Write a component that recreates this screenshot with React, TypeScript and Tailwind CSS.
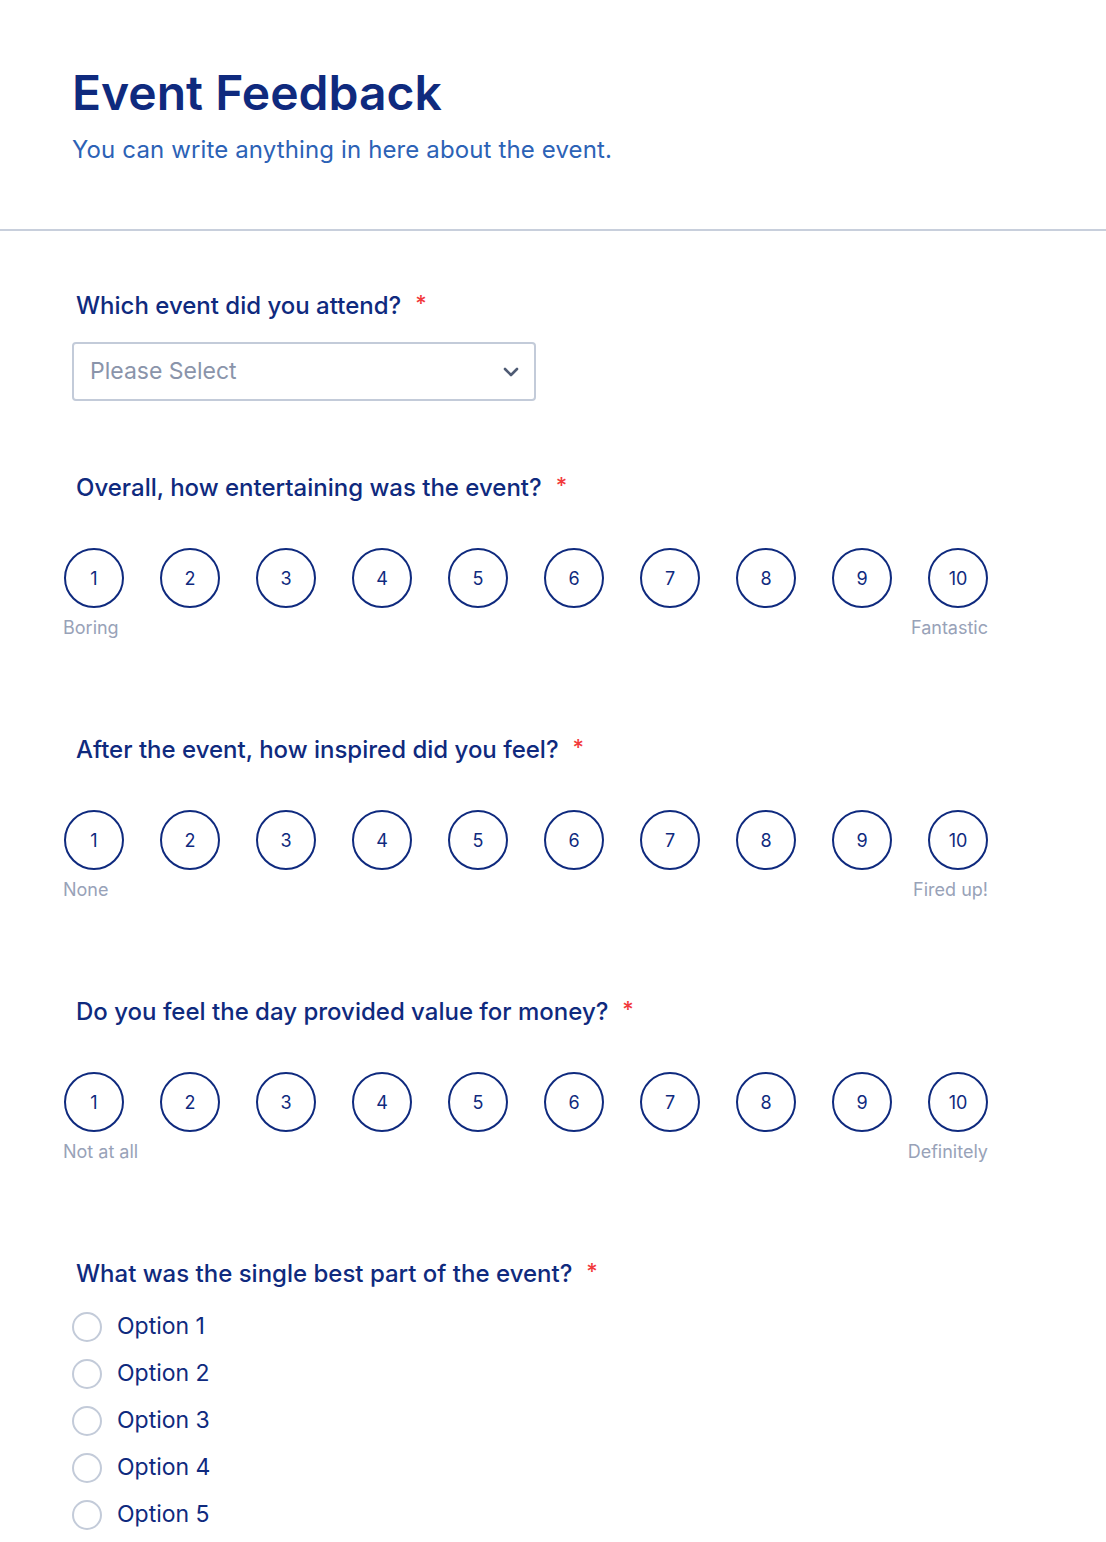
import React from "react";

const navy = "text-[#0f2a7e]";

const Label = ({ children }: { children: React.ReactNode }) => (
  <div className={`flex items-center pl-[4px] text-[24px] leading-[30px] font-medium ${navy}`}>
    <span>{children}</span>
    <span className="ml-[14px] text-[#f23a3c] text-[22px] leading-[30px] -mt-[6px]">*</span>
  </div>
);

const Rating = ({ q, low, high }: { q: string; low: string; high: string }) => (
  <div>
    <Label>{q}</Label>
    <div className="w-[924px] -ml-[8px] mt-[45px]">
      <div className="flex gap-[36px]">
        {[1, 2, 3, 4, 5, 6, 7, 8, 9, 10].map((n) => (
          <div
            key={n}
            className={`w-[60px] h-[60px] rounded-full border-2 border-[#0f2a7e] flex items-center justify-center text-[18px] ${navy}`}
          >
            {n}
          </div>
        ))}
      </div>
      <div className="flex justify-between mt-[8px] text-[18px] leading-[24px] text-[#98a2b8]">
        <span className="-ml-[1px]">{low}</span>
        <span>{high}</span>
      </div>
    </div>
  </div>
);

export default function App() {
  return (
    <div className="min-h-[1542px] bg-white" style={{ fontFamily: "Inter, 'Noto Sans', sans-serif" }}>
      <div className="px-[72px] pt-[64px] pb-[64px]">
        <h1 className={`text-[48px] leading-[58px] font-semibold ${navy}`}>Event Feedback</h1>
        <p className="mt-[13px] text-[24px] leading-[30px] tracking-[0.13px] text-[#2c62b6]">
          You can write anything in here about the event.
        </p>
      </div>
      <div className="h-[2px] bg-[#c8cfdc]" />

      <div className="px-[72px] pt-[60px]">
        <Label>Which event did you attend?</Label>
        <div className="mt-[21px] w-[464px] h-[59px] border-2 border-[#c3cbd9] rounded-[4px] flex items-center justify-between pl-[16px] pr-[14px]">
          <span className="text-[23px] text-[#8a94aa]">Please Select</span>
          <svg width="18" height="12" viewBox="0 0 18 12" fill="none">
            <path d="M3 3l6 6 6-6" stroke="#4f5b74" strokeWidth="2.6" strokeLinecap="round" strokeLinejoin="round" />
          </svg>
        </div>

        <div className="mt-[72px]">
          <Rating q="Overall, how entertaining was the event?" low="Boring" high="Fantastic" />
        </div>
        <div className="mt-[95px]">
          <Rating q="After the event, how inspired did you feel?" low="None" high="Fired up!" />
        </div>
        <div className="mt-[95px]">
          <Rating q="Do you feel the day provided value for money?" low="Not at all" high="Definitely" />
        </div>

        <div className="mt-[95px]">
          <Label>What was the single best part of the event?</Label>
          <div className="mt-[14px] flex flex-col">
            {["Option 1", "Option 2", "Option 3", "Option 4", "Option 5"].map((o) => (
              <div key={o} className="flex items-center h-[47px]">
                <div className="w-[30px] h-[30px] rounded-full border-2 border-[#c3cbd9]" />
                <span className={`ml-[15px] text-[23px] ${navy}`}>{o}</span>
              </div>
            ))}
          </div>
        </div>
      </div>
    </div>
  );
}
